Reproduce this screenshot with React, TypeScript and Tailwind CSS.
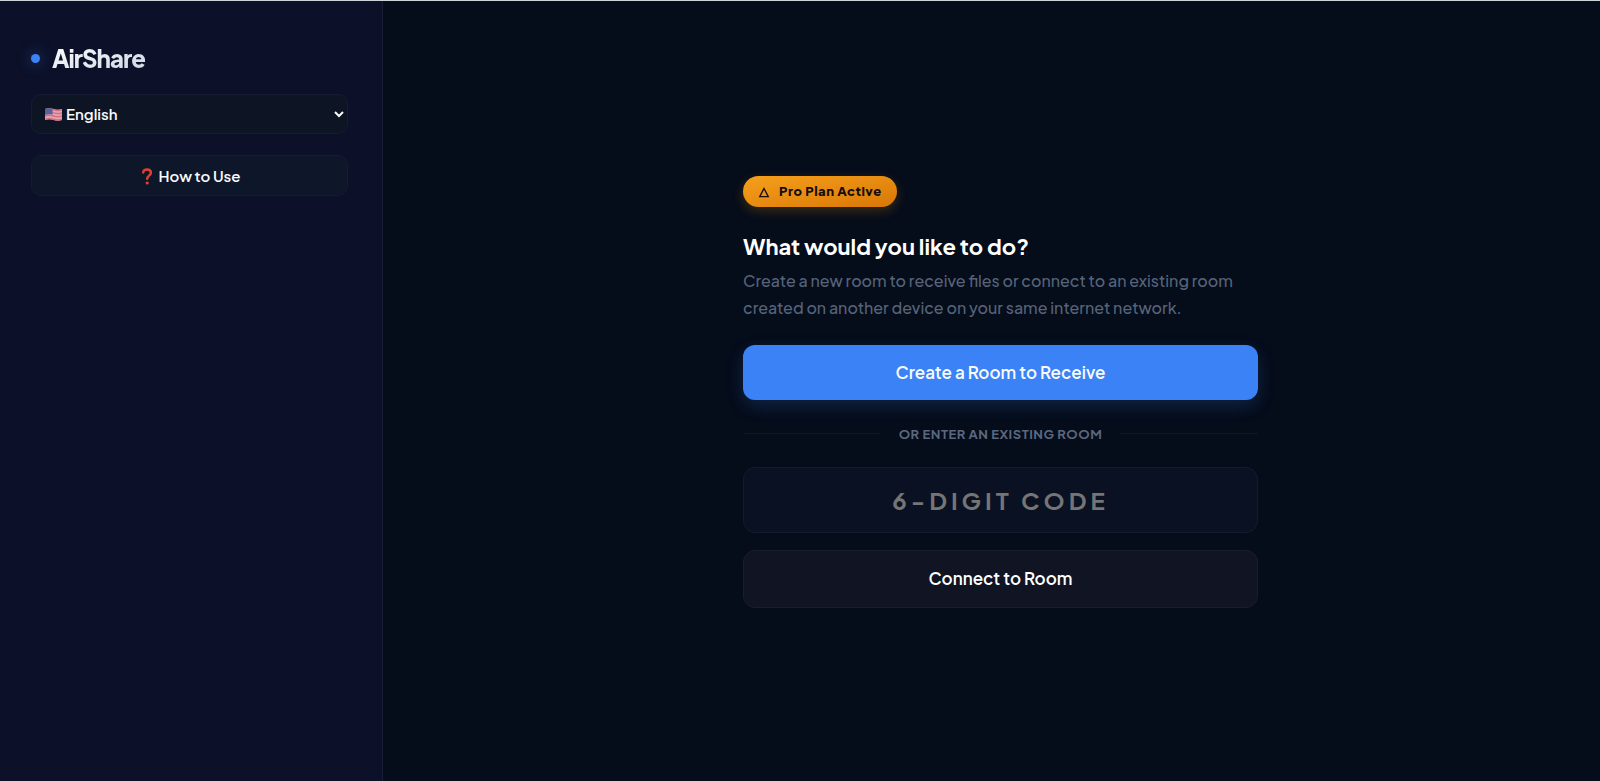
import { useState } from 'react';
import type { FormEvent } from 'react';

const LANGUAGES = [
  { code: 'en', label: 'English' },
  { code: 'es', label: 'Español' },
  { code: 'fr', label: 'Français' },
];

function FlagIcon() {
  return (
    <svg viewBox="0 0 34 26" className="h-[13px] w-[17px]" aria-hidden="true">
      <path d="M0 2C6 0 11 0 17 2s11 2 17 0v22c-6 2-11 2-17 0s-11-2-17 0z" fill="#e6a5b4" />
      <path
        d="M0 3.500c6-2 11-2 17 0s11 2 17 0M0 9.800c6-2 11-2 17 0s11 2 17 0M0 16.100c6-2 11-2 17 0s11 2 17 0M0 22.400c6-2 11-2 17 0s11 2 17 0"
        fill="none"
        stroke="#d4707f"
        strokeWidth="3"
      />
      <path d="M0 2C5 .400 10 .300 15 1.400v12C10 12.300 5 12.400 0 14z" fill="#56639a" />
    </svg>
  );
}

function QuestionIcon() {
  return (
    <svg viewBox="-4 0 16 17" className="h-[17px] w-4" aria-hidden="true">
      <path
        d="M1.200 4.600C1.200 2.500 2.900 1.400 5 1.400s3.900 1.200 3.900 3.300c0 2.800-3.700 3-3.700 6"
        fill="none"
        stroke="#e0402f"
        strokeWidth="2.500"
        strokeLinecap="round"
      />
      <circle cx="5.200" cy="15" r="1.600" fill="#e0402f" />
    </svg>
  );
}

function Sidebar() {
  const [language, setLanguage] = useState('en');

  return (
    <aside className="w-[383px] shrink-0 border-r border-[#172033] bg-[#0c1129] pt-[41px] pr-[34px] pl-[31px]">
      {/* Logo */}
      <div className="flex h-8 items-center gap-3">
        <span className="h-[9px] w-[9px] rounded-full bg-[#3b82f6] shadow-[0_0_14px_rgba(59,130,246,0.5)]" />
        <h1 className="bg-linear-to-br from-white to-slate-300 bg-clip-text text-2xl font-extrabold tracking-[-1px] text-transparent">
          AirShare
        </h1>
      </div>

      {/* Language */}
      <div className="relative mt-5">
        <span className="pointer-events-none absolute inset-y-0 left-[14px] flex items-center">
          <FlagIcon />
        </span>
        <select
          aria-label="Language"
          value={language}
          onChange={(e) => setLanguage(e.target.value)}
          className="block h-10 w-full rounded-[10px] border border-[#141d30] bg-[#0d1424] pb-0.5 pl-[30px] text-[15px] font-semibold text-slate-50"
        >
          {LANGUAGES.map((lang) => (
            <option key={lang.code} value={lang.code}>
              {lang.label}
            </option>
          ))}
        </select>
      </div>

      <button
        type="button"
        className="mt-[21px] flex h-[41px] w-full items-center justify-center gap-1 rounded-[10px] border border-[#141d30] bg-[#0e1629] pt-0.5 text-[15px] font-semibold text-slate-50"
      >
        <QuestionIcon />
        How to Use
      </button>
    </aside>
  );
}

function ProBadge() {
  return (
    <div className="flex h-[31px] w-fit items-center gap-[9px] rounded-full bg-linear-to-br from-[#f5a01b] to-[#d97706] px-[15px] pt-0.5 text-[13px] font-extrabold tracking-[0.5px] text-[#140d08] shadow-[0_4px_12px_rgba(245,158,11,0.22)]">
      <svg viewBox="0 0 12 11" className="h-[11px] w-3" aria-hidden="true">
        <path d="M6 1.500 10.300 9.700H1.700z" fill="none" stroke="currentColor" strokeWidth="1.300" />
      </svg>
      Pro Plan Active
    </div>
  );
}

export default function App() {
  const [code, setCode] = useState('');

  const handleConnect = (e: FormEvent) => {
    e.preventDefault();
  };

  return (
    <div className="flex min-h-screen border-t border-[#cbd5d8] bg-[#050c1a] font-['Plus_Jakarta_Sans','Inter',sans-serif]">
      <Sidebar />

      <main className="flex flex-1 items-center justify-center pt-px pl-[18px]">
        <div className="w-full max-w-[515px]">
          <ProBadge />

          <h2 className="mt-6 text-[22px] leading-[30px] font-bold text-white">What would you like to do?</h2>
          <p className="mt-1.5 text-base leading-[27px] font-medium text-[#566379]">
            Create a new room to receive files or connect to an existing room created on another device on your
            same internet network.
          </p>

          <button
            type="button"
            className="mt-6 h-[55px] w-full rounded-xl bg-[#3b82f6] pt-0.5 text-[17px] font-semibold text-slate-50 shadow-[0_6px_18px_rgba(59,130,246,0.2)]"
          >
            Create a Room to Receive
          </button>

          {/* Divider */}
          <div className="mt-6 mb-[23px] flex items-center gap-[18px] text-[13px] leading-5 font-bold tracking-[0.5px] text-[#5b6880]">
            <span className="h-px flex-1 bg-[#0e1524]" />
            OR ENTER AN EXISTING ROOM
            <span className="h-px flex-1 bg-[#0e1524]" />
          </div>

          <form onSubmit={handleConnect}>
            <input
              type="text"
              aria-label="6-digit code"
              maxLength={6}
              placeholder="6-DIGIT CODE"
              value={code}
              onChange={(e) => setCode(e.target.value)}
              className="block h-[66px] w-full rounded-xl border border-[#141b2c] bg-[#0a1122] text-center text-2xl font-bold tracking-[4px] text-white placeholder:text-[#757575]"
            />
            <button
              type="submit"
              className="mt-[17px] h-[58px] w-full rounded-xl border border-[#181e2e] bg-[#101423] text-[17px] font-semibold text-white"
            >
              Connect to Room
            </button>
          </form>
        </div>
      </main>
    </div>
  );
}
